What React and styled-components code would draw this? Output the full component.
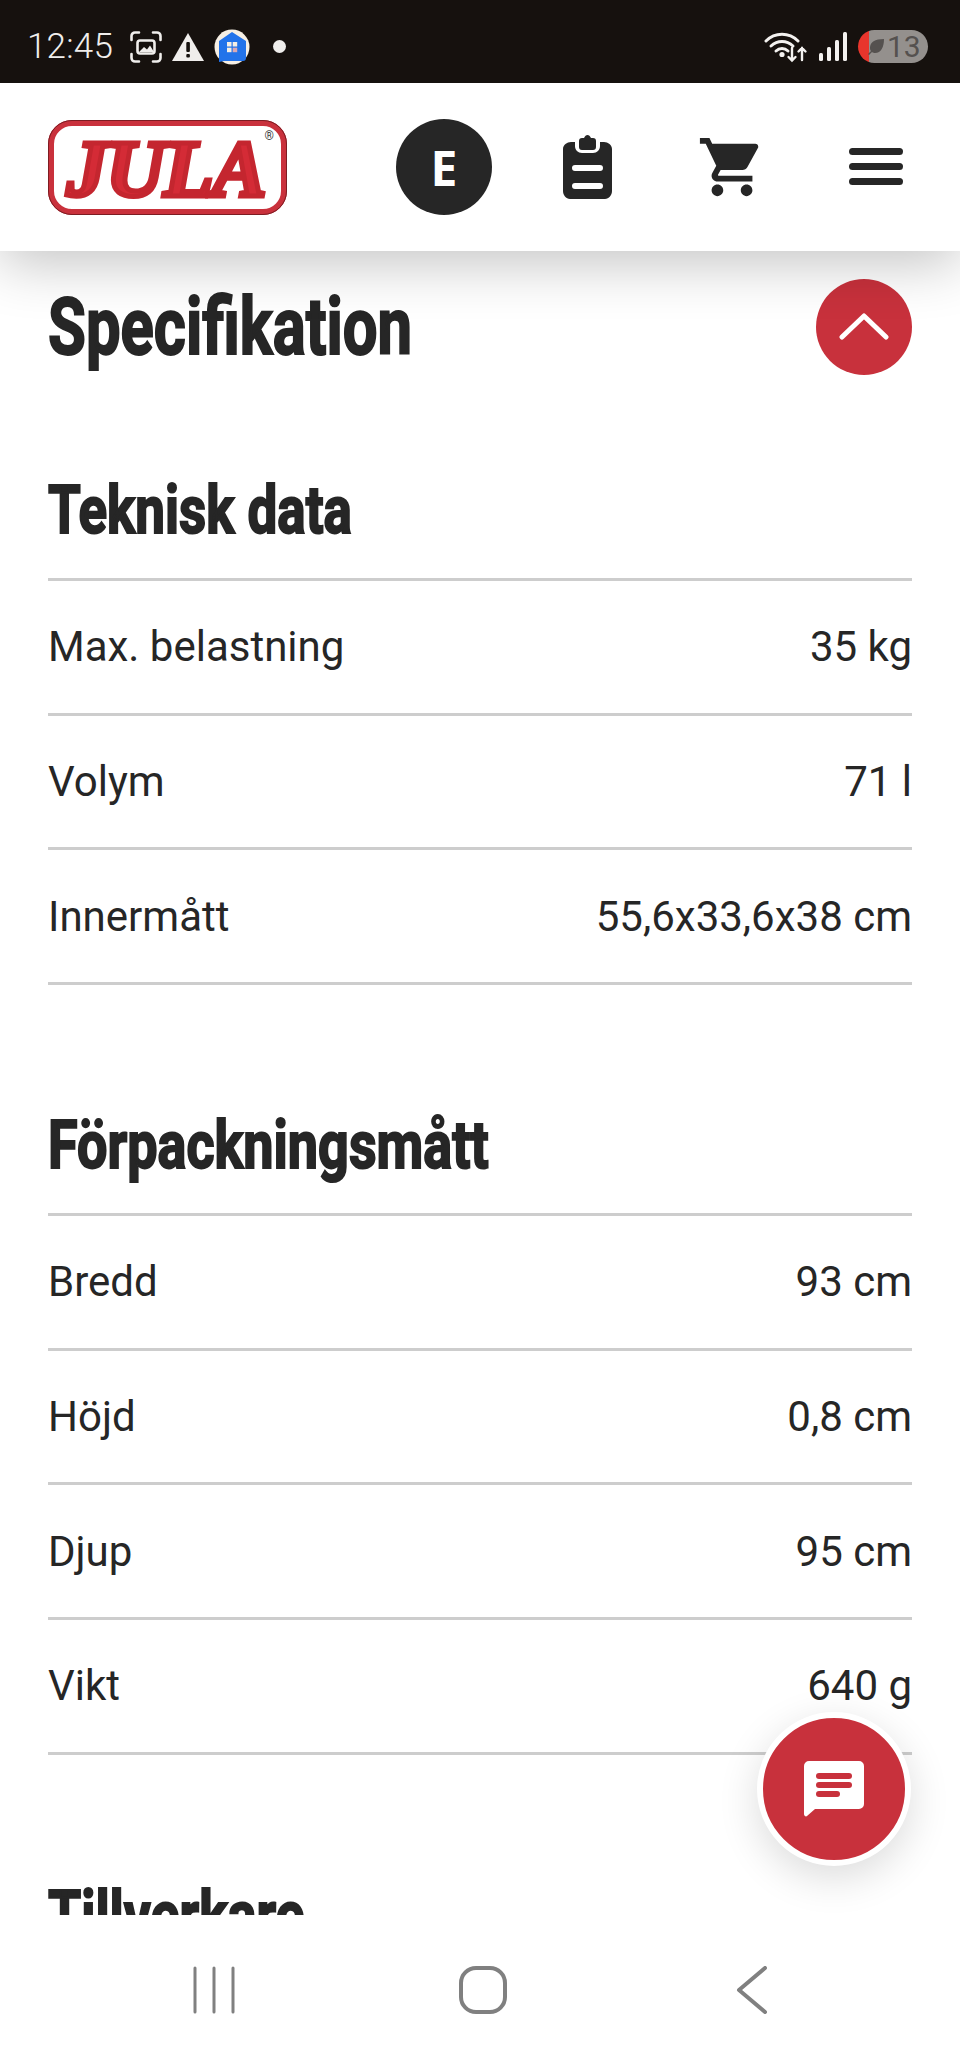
import React from 'react'
import styled, { createGlobalStyle } from 'styled-components'

const GlobalStyle = createGlobalStyle`
  html, body {
    margin: 0;
    padding: 0;
    background: #fff;
  }
  * {
    box-sizing: border-box;
  }
`

const Page = styled.div`
  position: relative;
  width: 960px;
  height: 2059px;
  overflow: hidden;
  display: flex;
  flex-direction: column;
  background: #fff;
  font-family: Roboto, "Liberation Sans", sans-serif;
  color: #262626;
`

const StatusBar = styled.div`
  height: 83px;
  flex: none;
  display: flex;
  align-items: center;
  justify-content: space-between;
  padding: 10px 32px 0 27px;
  background: #16110e;
  position: relative;
  z-index: 3;
`

const StatusGroup = styled.div`
  display: flex;
  align-items: center;
  gap: ${({ $gap }) => $gap}px;
`

const Clock = styled.span`
  font-size: 35px;
  font-weight: 300;
  color: #f0eeec;
  margin-right: 8px;
  letter-spacing: 0.2px;
`

const Battery = styled.div`
  width: 70px;
  height: 33px;
  border-radius: 17px;
  overflow: hidden;
  display: flex;
  align-items: center;
  gap: 2px;
  background: linear-gradient(to right, #e8352c 0 11px, #94908d 11px);
  padding-left: 9px;
  font-size: 30px;
  font-weight: 400;
  color: #55514f;
`

const Header = styled.header`
  height: 168px;
  flex: none;
  display: flex;
  align-items: center;
  padding: 0 57px 0 48px;
  background: #fff;
  position: relative;
  z-index: 2;
  box-shadow: 0 12px 56px rgba(0, 0, 0, 0.24);
`

const Logo = styled.div`
  position: relative;
  width: 239px;
  height: 95px;
  flex: none;
  display: flex;
  align-items: center;
  justify-content: center;
  border: 6px solid #c9313c;
  border-radius: 24px;
  outline: 1px solid #7d1c22;
  outline-offset: -1px;
  background: #fff;
`

const LogoText = styled.span`
  font-family: "Liberation Serif", serif;
  font-style: italic;
  font-weight: 700;
  font-size: 81px;
  line-height: 66px;
  letter-spacing: -1px;
  color: #d42b36;
  -webkit-text-stroke: 5px #c4262f;
  margin-top: 3px;
  margin-right: 3px;
`

const LogoMark = styled.span`
  position: absolute;
  top: 3px;
  right: 7px;
  font-size: 12px;
  color: #444;
`

const HeaderIcons = styled.nav`
  margin-left: auto;
  display: flex;
  align-items: center;
`

const Avatar = styled.div`
  width: 96px;
  height: 96px;
  border-radius: 50%;
  background: #262626;
  color: #fff;
  display: flex;
  align-items: center;
  justify-content: center;
  font-family: "Open Sans", sans-serif;
  font-size: 48px;
  font-weight: 700;
  margin-right: 71px;
`

const HeaderIcon = styled.svg`
  display: block;
  flex: none;
  fill: #262626;
  margin-right: ${({ $after }) => $after || 0}px;
`

const Main = styled.main`
  flex: 1;
  min-height: 0;
  overflow: hidden;
  padding: 0 48px;
  background: #fff;
`

const SpecHeader = styled.div`
  display: flex;
  align-items: center;
  justify-content: space-between;
  padding-top: 28px;
`

const Squeezed = styled.span`
  display: inline-block;
  transform: scaleX(${({ $x }) => $x});
  transform-origin: left center;
  white-space: nowrap;
`

const SpecTitle = styled.h1`
  margin: 0;
  font-size: 80px;
  line-height: 96px;
  font-weight: 700;
  -webkit-text-stroke: 2px #262626;
  color: #262626;
`

const ToggleButton = styled.div`
  width: 96px;
  height: 96px;
  border-radius: 50%;
  background: #c8313c;
  display: flex;
  align-items: center;
  justify-content: center;
  padding-bottom: 3px;
`

const Section = styled.section``

const SectionTitle = styled.h2`
  margin: 0;
  height: ${({ $height }) => $height}px;
  display: flex;
  align-items: flex-end;
  padding-bottom: 28px;
  border-bottom: 3px solid #cdcdcd;
  font-size: 67px;
  line-height: 80px;
  font-weight: 700;
  -webkit-text-stroke: 2px #262626;
  color: #262626;
`

const Row = styled.div`
  height: 134.7px;
  display: flex;
  align-items: center;
  justify-content: space-between;
  border-bottom: 3px solid #cdcdcd;
  font-size: 42px;
  color: #262626;
`

const Fab = styled.div`
  position: absolute;
  left: 757px;
  top: 1712px;
  width: 154px;
  height: 154px;
  border-radius: 50%;
  border: 6px solid #fff;
  background: #c8313c;
  display: flex;
  align-items: center;
  justify-content: center;
  box-shadow: 0 12px 40px rgba(0, 0, 0, 0.14);
  z-index: 4;
`

const NavBar = styled.div`
  height: 144px;
  flex: none;
  display: flex;
  align-items: flex-start;
  justify-content: center;
  gap: 221px;
  padding: 51px 0 0 6px;
  background: #fff;
  position: relative;
  z-index: 3;
`

const NavIcon = styled.svg`
  display: block;
  fill: none;
  stroke: #808080;
`

const sections = [
  {
    title: 'Teknisk data',
    squeeze: 0.79,
    height: 206,
    rows: [
      ['Max. belastning', '35 kg'],
      ['Volym', '71 l'],
      ['Innermått', '55,6x33,6x38 cm'],
    ],
  },
  {
    title: 'Förpackningsmått',
    squeeze: 0.805,
    height: 231,
    rows: [
      ['Bredd', '93 cm'],
      ['Höjd', '0,8 cm'],
      ['Djup', '95 cm'],
      ['Vikt', '640 g'],
    ],
  },
]

function StatusIconsLeft() {
  return (
    <>
      <svg width="32" height="32" viewBox="0 0 32 32" fill="none">
        <path d="M1.5 9V5a3.5 3.5 0 0 1 3.5-3.5h4M23 1.5h4A3.5 3.5 0 0 1 30.500 5v4M30.500 23v4a3.500 3.500 0 0 1-3.500 3.500h-4M9 30.500H5A3.500 3.500 0 0 1 1.500 27v-4" stroke="#f0eeec" strokeWidth="2.600" strokeLinecap="round" />
        <rect x="7.500" y="9.500" width="17" height="13" rx="2.500" stroke="#f0eeec" strokeWidth="2.600" />
        <path d="M9 21l5-5 3 2.500 3-4 4 6.500z" fill="#f0eeec" />
      </svg>
      <svg width="34" height="30" viewBox="0 0 34 30">
        <path d="M17 1L33 29H1z" fill="#f0eeec" />
        <rect x="15.300" y="10" width="3.600" height="10" rx="1" fill="#16110e" />
        <rect x="15.300" y="22" width="3.600" height="3.600" rx="1" fill="#16110e" />
      </svg>
      <svg width="36" height="36" viewBox="0 0 36 36">
        <circle cx="18" cy="18" r="17.500" fill="#f6efe4" />
        <path d="M18 3l14 9v17a3 3 0 0 1-3 3H10l-5 1 0-4V12z" fill="#2273ea" />
        <rect x="13" y="13" width="4.500" height="4.500" fill="#f6efe4" />
        <rect x="18.700" y="13" width="4.500" height="4.500" fill="#f6efe4" />
        <rect x="13" y="18.700" width="4.500" height="4.500" fill="#f6efe4" />
        <rect x="18.700" y="18.700" width="4.500" height="4.500" fill="#d9a9b4" />
      </svg>
      <svg width="13" height="13" viewBox="0 0 13 13" style={{ marginLeft: 14 }}>
        <circle cx="6.500" cy="6.500" r="6.500" fill="#f0eeec" />
      </svg>
    </>
  )
}

function StatusIconsRight() {
  return (
    <>
      <svg width="44" height="32" viewBox="0 0 44 32" fill="none" stroke="#f4f2f0" strokeWidth="3" strokeLinecap="round">
        <path d="M2 10C11 1 25 1 34 10" />
        <path d="M7 15c6.500-6 15.500-6 22 0" />
        <path d="M12 20c3.500-3.200 8.500-3.200 12 0" />
        <circle cx="18" cy="23.500" r="2.600" fill="#f4f2f0" stroke="none" />
        <path d="M28 17v12M24.500 26l3.500 3.500 3.500-3.500M38 29V17M34.500 20.500L38 17l3.500 3.500" strokeWidth="2.400" />
      </svg>
      <svg width="30" height="30" viewBox="0 0 30 30" fill="#f4f2f0">
        <rect x="1" y="21" width="4" height="8" rx="1.500" />
        <rect x="9" y="15" width="4" height="14" rx="1.500" />
        <rect x="17" y="8" width="4" height="21" rx="1.500" />
        <rect x="25" y="0" width="4" height="29" rx="1.500" />
      </svg>
      <Battery>
        <svg width="18" height="18" viewBox="0 0 18 18" fill="#55514f">
          <path d="M17 1C8 1 3 4 3 10c0 1.500.5 2.500 1 3l-3 3 1 1 3-3c1 .8 2 1 3 1 6 0 9-6 9-14z" />
        </svg>
        <span>13</span>
      </Battery>
    </>
  )
}

function App() {
  return (
    <Page>
      <GlobalStyle />
      <StatusBar>
        <StatusGroup $gap={9}>
          <Clock>12:45</Clock>
          <StatusIconsLeft />
        </StatusGroup>
        <StatusGroup $gap={10}>
          <StatusIconsRight />
        </StatusGroup>
      </StatusBar>

      <Header>
        <Logo>
          <LogoText>JULA</LogoText>
          <LogoMark>®</LogoMark>
        </Logo>
        <HeaderIcons>
          <Avatar>E</Avatar>
          <HeaderIcon as="svg" width="49" height="64" viewBox="0 0 49 64" $after={85}>
            <path fillRule="evenodd" d="M8 7h4v4c0 4 3 7 7 7h11c4 0 7-3 7-7V7h4c4 0 8 3 8 7v42c0 4-3 8-7 8H7c-4 0-7-4-7-8V14c0-4 4-7 8-7zM12 30a3 3 0 0 0 0 6h25a3 3 0 0 0 0-6zM12 48a3 3 0 0 0 0 6h25a3 3 0 0 0 0-6z" />
            <path d="M16 6c0-2 1-3 3-3h2c1-2 2-3 3.500-3S27 1 28 3h2c2 0 3 1 3 3v6c0 2-1 3-3 3H19c-2 0-3-1-3-3z" />
          </HeaderIcon>
          <HeaderIcon as="svg" width="70" height="70" viewBox="0 0 24 24" $after={82}>
            <path d="M7 18c-1.100 0-1.990.9-1.990 2S5.900 22 7 22s2-.9 2-2-.9-2-2-2zM1 2v2h2l3.600 7.590-1.350 2.450c-.16.28-.25.61-.25.96 0 1.100.9 2 2 2h12v-2H7.420c-.14 0-.25-.11-.25-.25l.03-.12.9-1.630h7.450c.75 0 1.410-.41 1.750-1.030l3.580-6.470c.08-.14.12-.31.12-.48 0-.55-.45-1-1-1H5.210l-.94-2H1zm16 16c-1.100 0-1.990.9-1.990 2s.89 2 1.990 2 2-.9 2-2-.9-2-2-2z" />
          </HeaderIcon>
          <HeaderIcon as="svg" width="54" height="38" viewBox="0 0 54 38">
            <rect y="0" width="54" height="7" rx="3.500" />
            <rect y="15" width="54" height="7" rx="3.500" />
            <rect y="30" width="54" height="7" rx="3.500" />
          </HeaderIcon>
        </HeaderIcons>
      </Header>

      <Main>
        <SpecHeader>
          <SpecTitle><Squeezed $x={0.77}>Specifikation</Squeezed></SpecTitle>
          <ToggleButton>
            <svg width="50" height="28" viewBox="0 0 50 28" fill="none" stroke="#fff" strokeWidth="5" strokeLinecap="round" strokeLinejoin="round">
              <path d="M3 25L25 4l22 21" />
            </svg>
          </ToggleButton>
        </SpecHeader>

        {sections.map((section) => (
          <Section key={section.title}>
            <SectionTitle $height={section.height}>
              <Squeezed $x={section.squeeze}>{section.title}</Squeezed>
            </SectionTitle>
            {section.rows.map(([label, value]) => (
              <Row key={label}>
                <span>{label}</span>
                <span>{value}</span>
              </Row>
            ))}
          </Section>
        ))}

        <SectionTitle $height={231}>
          <Squeezed $x={0.8}>Tillverkare</Squeezed>
        </SectionTitle>
      </Main>

      <Fab>
        <svg width="60" height="56" viewBox="0 0 60 56">
          <path d="M5 0h50a5 5 0 0 1 5 5v38a5 5 0 0 1-5 5H11L3 55c-1 1-3 0-3-2V5a5 5 0 0 1 5-5z" fill="#fff" />
          <rect x="12" y="12" width="36" height="6" rx="3" fill="#c8313c" />
          <rect x="12" y="21" width="36" height="6" rx="3" fill="#c8313c" />
          <rect x="12" y="30" width="24" height="6" rx="3" fill="#c8313c" />
        </svg>
      </Fab>

      <NavBar>
        <NavIcon width="48" height="48" viewBox="0 0 48 48" strokeWidth="3" strokeLinecap="round">
          <path d="M5 2v44M24 2v44M43 2v44" />
        </NavIcon>
        <NavIcon width="48" height="48" viewBox="0 0 48 48" strokeWidth="4">
          <rect x="2" y="2" width="44" height="44" rx="15" />
        </NavIcon>
        <NavIcon width="48" height="48" viewBox="0 0 48 48" strokeWidth="4" strokeLinecap="round" strokeLinejoin="round">
          <path d="M37 2L11 24l26 22" />
        </NavIcon>
      </NavBar>
    </Page>
  )
}

export default App
